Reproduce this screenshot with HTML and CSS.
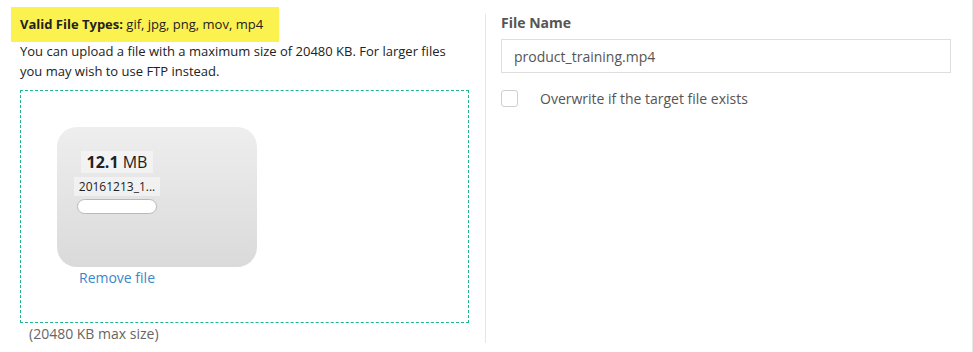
FILE: index.html
```html
<!DOCTYPE html>
<html lang="en">
<head>
    <meta charset="UTF-8">
    <meta name="viewport" content="width=device-width, initial-scale=1.0">
    <title>Upload File</title>
    <link rel="stylesheet" href="styles.css">
</head>
<body>
    <div class="upload-panel">
        <div class="col-left">
            <div class="file-types"><strong>Valid File Types:</strong> gif, jpg, png, mov, mp4</div>
            <p class="upload-note">You can upload a file with a maximum size of 20480 KB. For larger files you may wish to use FTP instead.</p>

            <div class="dropzone">
                <div class="preview">
                    <div class="preview-image"></div>
                    <div class="preview-details">
                        <div class="preview-size"><strong>12.1</strong> MB</div>
                        <div class="preview-name">20161213_1...</div>
                        <div class="preview-progress"></div>
                    </div>
                    <a href="#" class="remove-link">Remove file</a>
                </div>
            </div>
            <div class="max-size">(20480 KB max size)</div>
        </div>

        <div class="col-right">
            <label for="fileName" class="field-label">File Name</label>
            <input type="text" id="fileName" class="text-input" value="product_training.mp4">
            <label class="check-row">
                <input type="checkbox" class="check-box">
                <span>Overwrite if the target file exists</span>
            </label>
        </div>
    </div>
</body>
</html>
```

FILE: styles.css
```css
body {
    margin: 0;
    background-color: #fff;
    font-family: "Open Sans", Arial, sans-serif;
    font-size: 13px;
    color: #222;
}
.upload-panel {
    display: flex;
    height: 352px;
    border-right: 1px solid #e6e6e6;
    box-sizing: border-box;
}
.col-left {
    width: 485px;
    box-sizing: border-box;
    padding: 7px 16px 0 20px;
}
.file-types {
    display: inline-block;
    margin-left: -9px;
    padding: 9px 16px 9px 9px;
    line-height: 17px;
    background-color: #fcf24f;
}
.upload-note {
    margin: -1px 0 0;
    line-height: 20px;
}
.dropzone {
    margin-top: 9px;
    height: 233px;
    box-sizing: border-box;
    border: 1px dashed #1fb58f;
    padding: 36px;
}
.preview {
    position: relative;
    width: 120px;
}
.preview-image {
    width: 200px;
    height: 140px;
    border-radius: 20px;
    background: linear-gradient(to bottom, #eeeeee, #dadada);
}
.preview-details {
    position: absolute;
    top: 24px;
    left: 0;
    width: 120px;
    display: flex;
    flex-direction: column;
    align-items: center;
}
.preview-size {
    font-size: 16px;
    line-height: 22px;
    padding: 0 6px;
    background-color: rgba(255, 255, 255, 0.45);
    color: #222;
}
.preview-name {
    margin-top: 4px;
    font-size: 12px;
    line-height: 19px;
    padding: 0 5px;
    background-color: rgba(255, 255, 255, 0.45);
    white-space: nowrap;
}
.preview-progress {
    margin-top: 3px;
    width: 78px;
    height: 13px;
    border: 1px solid #b9b9b9;
    border-radius: 8px;
    background-color: #fff;
}
.remove-link {
    display: block;
    text-align: center;
    margin-top: 1px;
    font-size: 14px;
    color: #3a87cc;
    text-decoration: none;
    line-height: 19px;
}
.max-size {
    margin: 1px 0 0 9px;
    font-size: 14px;
    color: #666;
    line-height: 19px;
}
.col-right {
    flex: 1;
    border-left: 1px solid #e6e6e6;
    margin: 14px 0 9px;
    padding: 0 21px 0 15px;
    display: flex;
    flex-direction: column;
    color: #555;
}
.field-label {
    font-weight: bold;
    font-size: 14px;
    line-height: 20px;
    margin-top: -1px;
}
.text-input {
    margin-top: 6px;
    height: 34px;
    box-sizing: border-box;
    border: 1px solid #dedede;
    padding: 0 12px;
    font-family: inherit;
    font-size: 14px;
    color: #555;
}
.check-row {
    display: flex;
    align-items: center;
    margin-top: 16px;
    font-size: 14px;
}
.check-box {
    appearance: none;
    margin: 0 22px 0 0;
    width: 17px;
    height: 17px;
    border: 1px solid #cfcfcf;
    border-radius: 3px;
}
```
